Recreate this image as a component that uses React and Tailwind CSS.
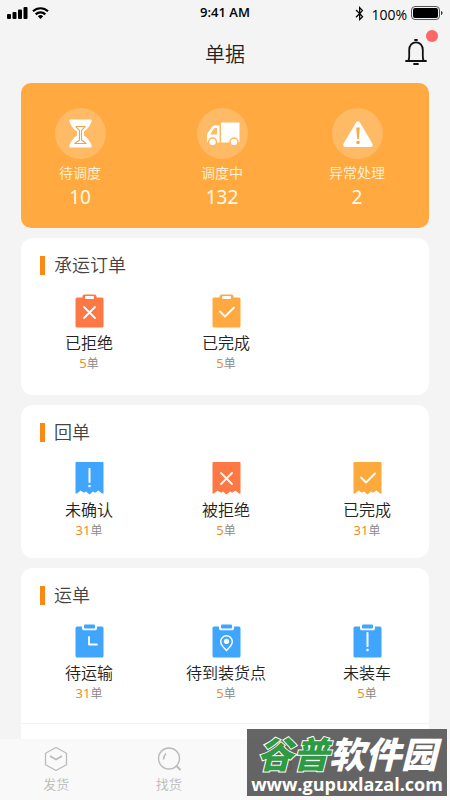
import { FaBluetoothB } from 'react-icons/fa';

const summary = [
  { label: '待调度', value: 10, icon: HourglassIcon },
  { label: '调度中', value: 132, icon: TruckIcon },
  { label: '异常处理', value: 2, icon: WarningIcon },
];

const carrierOrders = [
  { label: '已拒绝', count: 5, icon: <Clipboard color="#fd7844" mark="cross" /> },
  { label: '已完成', count: 5, icon: <Clipboard color="#ffa940" mark="check" /> },
];

const receipts = [
  { label: '未确认', count: 31, icon: <Receipt color="#40a5fd" mark="alert" /> },
  { label: '被拒绝', count: 5, icon: <Receipt color="#fd7844" mark="cross" /> },
  { label: '已完成', count: 31, icon: <Receipt color="#fda93c" mark="check" /> },
];

const waybills = [
  { label: '待运输', count: 31, icon: <Board mark="clock" /> },
  { label: '待到装货点', count: 5, icon: <Board mark="pin" /> },
  { label: '未装车', count: 5, icon: <Board mark="alert" /> },
];

function HourglassIcon() {
  return (
    <svg viewBox="0 0 51 51" className="size-[51px]" fill="none">
      <path
        d="M15.500 11.500h20c1.200 0 1.400 1 1 2-1.500 4-3.500 7.500-7.500 10v4c4 2.500 6 6 7.500 9.500.4 1.200.2 2.500-1 2.500h-20c-1.200 0-1.400-1.300-1-2.500 1.500-3.500 3.500-7 7.500-9.500v-4c-4-2.500-6-6-7.500-10-.4-1-.2-2 1-2z"
        fill="#fff"
      />
      <path
        d="M21 18.500h9c-1 1.800-2.500 2.500-3.500 4v9.500c1.500 1.500 3.500 2 4.500 3.500H20c1-1.500 3-2 4.500-3.500v-9.500c-1-1.500-2.500-2.200-3.500-4z"
        stroke="#f0a548"
        strokeWidth="1.100"
      />
    </svg>
  );
}

function TruckIcon() {
  return (
    <svg viewBox="0 0 51 51" className="size-[51px]" fill="#fff">
      <path d="M24 15.500c0-.7.300-1 1-1h16.500c.7 0 1 .3 1 1v18c0 .7-.3 1-1 1H25c-.7 0-1-.3-1-1z" />
      <path
        fillRule="evenodd"
        d="M22.500 17.500H18c-1.500 0-2.500.5-3.200 1.600l-4 6c-.6.800-.8 1.600-.8 2.500v6c0 .600.400.900 1 .900h11.500zM20 20v6.500h-7l3.500-5.300c.6-.900 1.100-1.200 2-1.200z"
      />
      <circle cx="15.500" cy="34" r="4" stroke="#ffb45c" strokeWidth="1.500" />
      <circle cx="37" cy="34" r="4" stroke="#ffb45c" strokeWidth="1.500" />
    </svg>
  );
}

function WarningIcon() {
  return (
    <svg viewBox="0 0 51 51" className="size-[51px]" fill="#fff">
      <path d="M24 14.500c1-1.600 3-1.600 4 0l12.300 21c1 1.800.2 3.500-1.800 3.500H13.500c-2 0-2.800-1.700-1.800-3.500z" />
      <path d="M24.200 19.500h3.600l-1 11.500h-1.600z" fill="#ffa940" />
      <circle cx="26" cy="34.500" r="1.800" fill="#ffa940" />
    </svg>
  );
}

function Mark({ type }) {
  switch (type) {
    case 'cross':
      return <path d="M9 13l11 11m0-11l-11 11" stroke="#fff" strokeWidth="1.800" strokeLinecap="round" />;
    case 'check':
      return (
        <path
          d="M8 17.500l5 5 9-9"
          stroke="#fff"
          strokeWidth="1.800"
          strokeLinecap="round"
          strokeLinejoin="round"
        />
      );
    case 'alert':
      return (
        <g fill="#fff">
          <rect x="13.500" y="8" width="2" height="15" rx="0.700" />
          <circle cx="14.500" cy="26" r="1.300" />
        </g>
      );
    case 'clock':
      return (
        <path
          d="M14 13v7.500h8"
          stroke="#fff"
          strokeWidth="1.800"
          strokeLinecap="round"
          strokeLinejoin="round"
        />
      );
    default:
      return (
        <g>
          <path
            d="M14.500 26.500c-3.500-3.300-5.800-6-5.800-9a5.800 5.800 0 0 1 11.600 0c0 3-2.300 5.700-5.800 9z"
            stroke="#fff"
            strokeWidth="1.400"
          />
          <circle cx="14.500" cy="17.300" r="2.600" fill="#fff" />
        </g>
      );
  }
}

// solid clipboard with an open clip
function Clipboard({ color, mark }) {
  return (
    <svg viewBox="0 0 29 34" className="h-[34px] w-[29px]" fill="none">
      <rect x="0.500" y="3.500" width="28" height="30" rx="1.500" fill={color} />
      <rect x="7.500" y="0.500" width="14" height="6" rx="2" fill={color} />
      <rect x="10" y="2" width="9" height="3" rx="1" fill="#fff" />
      <Mark type={mark} />
    </svg>
  );
}

// receipt with a torn bottom edge
function Receipt({ color, mark }) {
  return (
    <svg viewBox="0 0 29 34" className="h-[34px] w-[29px]" fill="none">
      <path
        d="M1.500 1h26c.6 0 1 .4 1 1v30.500h-1.500l-3.500-3-3.500 2.300-2-1.300-3.500 3-3.500-3-2 1.300-3.500-2.300-3.500 3H.5V2c0-.6.400-1 1-1z"
        fill={color}
      />
      <g transform="translate(0 -1)">
        <Mark type={mark} />
      </g>
    </svg>
  );
}

// blue board with the clip cut out of its top edge
function Board({ mark }) {
  return (
    <svg viewBox="0 0 29 34" className="h-[34px] w-[29px]" fill="none">
      <rect x="0.500" y="2.500" width="28" height="31" rx="1.500" fill="#40a5fd" />
      <path d="M7 1.500h15v2.500c0 1.500-.8 2.300-2.200 2.300H9.200C7.800 6.300 7 5.500 7 4z" fill="#fff" />
      <rect x="9" y="0.500" width="11" height="4" rx="1" fill="#40a5fd" />
      <Mark type={mark} />
    </svg>
  );
}

function StatusBar() {
  return (
    <div className="grid h-[26px] grid-cols-3 items-center px-[7px] font-['Open_Sans','Noto_Sans',sans-serif] text-black">
      <div className="flex items-center gap-1">
        <svg viewBox="0 0 21 12" className="h-3 w-[21px]">
          <rect x="0" y="7" width="4" height="5" rx="1" />
          <rect x="5.500" y="5" width="4" height="7" rx="1" />
          <rect x="11" y="2.500" width="4" height="9.500" rx="1" />
          <rect x="16.500" y="0" width="4" height="12" rx="1" />
        </svg>
        <svg viewBox="0 0 17 12" className="h-3 w-[17px]" fill="none" stroke="#000" strokeWidth="2.200">
          <path d="M1 4.300a10.800 10.800 0 0 1 15 0" />
          <path d="M3.700 7.400a6.800 6.800 0 0 1 9.600 0" />
          <path d="M8.500 12L5.800 9.300a3.800 3.800 0 0 1 5.400 0z" fill="#000" stroke="none" />
        </svg>
      </div>
      <span className="text-center text-[13px] font-semibold">9:41 AM</span>
      <div className="flex items-center justify-end">
        <FaBluetoothB className="mr-1 size-[15px]" />
        <span className="mr-1 pt-1 text-sm">100%</span>
        <svg viewBox="0 0 32 14" className="h-3.5 w-8">
          <rect x="0.500" y="0.500" width="28" height="13" rx="3.500" fill="none" stroke="#555" />
          <rect x="2" y="2" width="25" height="10" rx="2" />
          <path d="M30 5c2 .5 2 3.500 0 4z" fill="#333" />
        </svg>
      </div>
    </div>
  );
}

function Header() {
  return (
    <header className="grid h-[57px] grid-cols-3 items-center px-5">
      <h1 className="col-start-2 text-center text-xl font-[350] text-[#222]">单据</h1>
      <button aria-label="通知" className="relative mb-1.5 size-7 justify-self-end">
        <svg
          viewBox="0 0 28 28"
          className="size-7"
          fill="none"
          stroke="#111"
          strokeWidth="1.800"
          strokeLinecap="round"
          strokeLinejoin="round"
        >
          <path d="M4 23h20M6.500 22.500c.8-1.500.7-3 .7-5V12c0-4.500 3-7.700 6.800-7.700s6.800 3.200 6.800 7.700v5.500c0 2 0 3.500.7 5" />
          <path d="M12 26h4M13 2h2" />
        </svg>
        <span className="absolute -top-2 -right-2 size-3 rounded-full bg-[#ff6666]" />
      </button>
    </header>
  );
}

function SummaryCard() {
  return (
    <section className="grid h-[145px] shrink-0 grid-cols-[118fr_166fr_104fr] rounded-[10px] bg-[#ffa940] pt-[25px] pr-5">
      {summary.map(({ label, value, icon: Icon }) => (
        <button key={label} className="flex flex-col items-center whitespace-nowrap">
          <span className="size-[51px] rounded-full bg-white/20">
            <Icon />
          </span>
          <span className="mt-1 text-sm leading-5 font-[350] text-[#fff3dc]">{label}</span>
          <span className="text-[19px] leading-7 text-[#fffbe8]">{value}</span>
        </button>
      ))}
    </section>
  );
}

function Section({ title, items, className }) {
  return (
    <section className={`shrink-0 rounded-xl bg-white pt-4 ${className}`}>
      <div className="flex h-[22px] items-center gap-[9px] pl-[19px]">
        <span className="h-[19px] w-[5px] bg-[#fa8a14]" />
        <h2 className="text-lg leading-[22px] font-[350] text-[#444]">{title}</h2>
      </div>
      <div className="mt-[18px] -mr-2.5 grid grid-cols-[136fr_138fr_144fr]">
        {items.map((item) => (
          <button key={item.label} className="flex flex-col items-center">
            {item.icon}
            <span className="mt-1 text-base leading-[22px] font-[350] text-[#222]">{item.label}</span>
            <span className="text-xs leading-[18px] font-[350] text-[#888]">
              <span className="text-[13px] font-normal text-[#ee8e22]">{item.count}</span>单
            </span>
          </button>
        ))}
      </div>
    </section>
  );
}

function TabBar() {
  return (
    <nav className="grid h-[61px] shrink-0 grid-cols-4 bg-[#f9f9f9] pt-[7px] text-[13px] leading-5 font-[350] text-[#bbb]">
      <a href="#send" className="flex flex-col items-center gap-0.5">
        <svg viewBox="0 0 26 26" className="size-[26px]" fill="none" stroke="#bbb" strokeWidth="1.300">
          <path d="M13 1.500l10.500 5.700v11.600L13 24.500 2.500 18.800V7.200z" strokeLinejoin="round" />
          <path d="M7 10l6 3.500 6-3.500" strokeWidth="1.600" />
        </svg>
        发货
      </a>
      <a href="#find" className="flex flex-col items-center gap-0.5">
        <svg viewBox="0 0 26 26" className="size-[26px]" fill="none" stroke="#bbb" strokeWidth="1.400">
          <circle cx="13" cy="12.500" r="10.500" />
          <path d="M20 19.500l4.500 4.500" strokeWidth="2" />
          <path d="M7.500 13.500c0-3 .8-4.500 2.500-6" strokeWidth="1.600" />
        </svg>
        找货
      </a>
      <a href="#orders" aria-label="单据" className="flex flex-col items-center">
        <svg viewBox="0 0 26 26" className="size-[26px]" fill="none" stroke="#bbb" strokeWidth="1.400">
          <path d="M4 3h15v20H4zM19 10h4v13h-4" />
        </svg>
      </a>
    </nav>
  );
}

function Watermark() {
  return (
    <div className="absolute right-[3px] bottom-1 flex h-[67px] w-[200px] flex-col items-center bg-[#4a4a4a]/85 whitespace-nowrap text-white">
      <div className="pt-2 text-4xl leading-9 font-black italic">
        <span className="text-[#2f9a44] [-webkit-text-stroke:2px_white] [paint-order:stroke]">谷普</span>
        软件园
      </div>
      <div className="font-['Open_Sans',sans-serif] text-lg leading-[22px] font-bold">www.gupuxlazal.com</div>
    </div>
  );
}

function App() {
  return (
    <div className="relative flex h-screen flex-col overflow-hidden bg-[#f4f4f4] font-['Noto_Sans','Noto_Sans_CJK_SC',sans-serif]">
      <StatusBar />
      <Header />
      <main className="flex flex-1 flex-col gap-2.5 overflow-y-auto px-[21px] pb-2 [scrollbar-width:none]">
        <SummaryCard />
        <Section title="承运订单" items={carrierOrders} className="pb-[22px]" />
        <Section title="回单" items={receipts} className="pb-[18px]" />
        <div className="shrink-0 rounded-t-xl bg-white pb-4">
          <Section title="运单" items={waybills} className="pb-5" />
          <hr className="border-[#f3f3f3]" />
        </div>
      </main>
      <TabBar />
      <Watermark />
    </div>
  );
}

export default App;
